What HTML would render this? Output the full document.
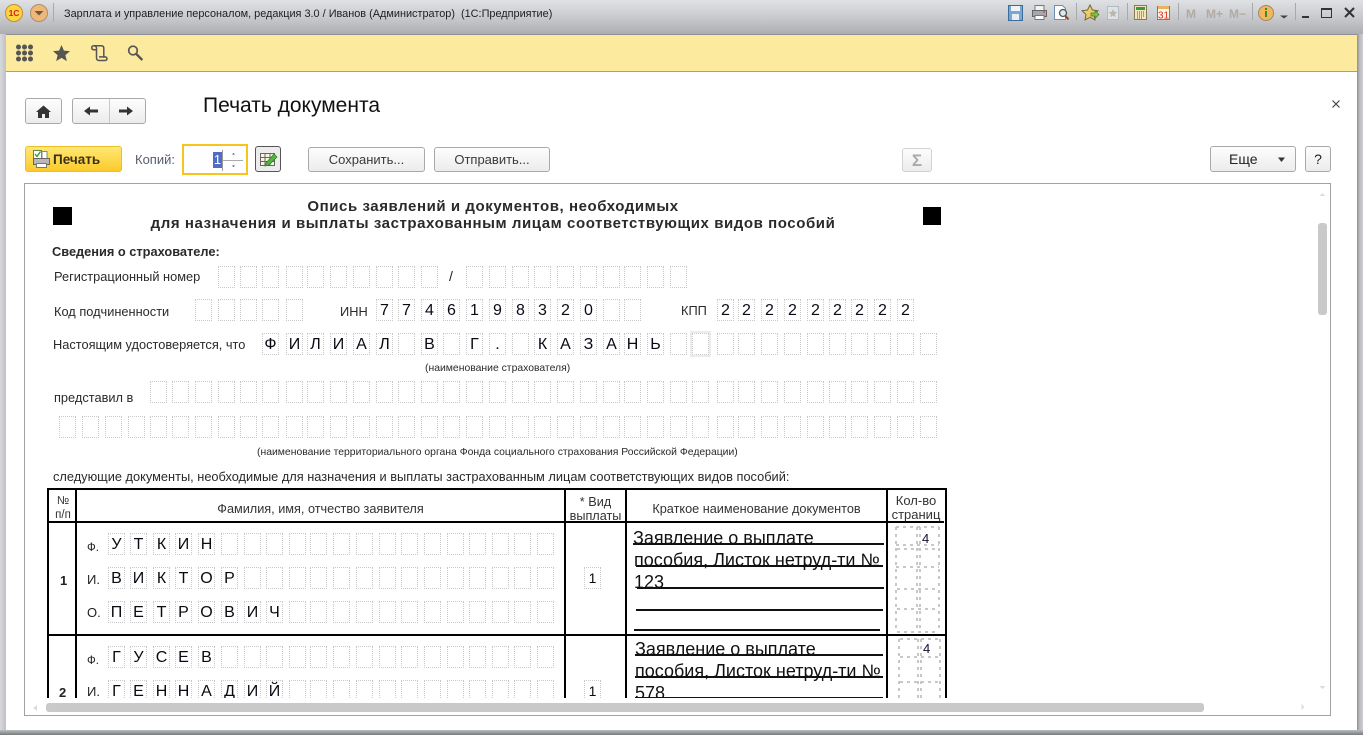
<!DOCTYPE html>
<html lang="ru"><head><meta charset="utf-8"><title>Печать документа</title>
<style>
html,body{margin:0;padding:0;background:#fff}
#w{position:relative;width:1363px;height:735px;overflow:hidden;background:#fff;font-family:"Liberation Sans",Arial,sans-serif;color:#222}
#w div,#w svg,#w span{position:absolute}
.t{white-space:nowrap}
.r{left:0;width:1363px;height:21px}
.r i{position:absolute;width:15px;height:20px;border:1px dotted #c8c8c8;font:16px/21px "Liberation Sans",sans-serif;color:#0a0a14;text-align:center;top:0}
.btn{box-sizing:border-box;border:1px solid #a9a9a9;border-radius:3px;background:linear-gradient(#fdfdfd,#ececec);text-align:center;font-size:13px;line-height:24px;color:#3a3a3a}
.h{font-size:12.700px;line-height:14px;color:#333;text-align:center;white-space:nowrap}
.l{font-size:12.800px;color:#2a2a2a;line-height:14px}
.s{font-size:10.400px;color:#2a2a2a;line-height:12px}
.b{background:#000}
.u{height:2px;background:#111}
.d{font-size:18px;line-height:20px;color:#111}
</style></head><body>
<div id="w">
<!-- window chrome -->
<div style="left:0;top:0;width:1363px;height:35px;background:linear-gradient(#dfe1e4,#c8cacd 50%,#aaacb0)"></div>
<div style="left:0;top:34px;width:6px;height:701px;background:linear-gradient(90deg,#d8d9dc,#bfc1c5)"></div>
<div style="left:1357px;top:34px;width:6px;height:701px;background:linear-gradient(90deg,#8e8e90,#b8b9bc 40%,#cfd0d3)"></div>
<div style="left:0;top:730px;width:1363px;height:5px;background:linear-gradient(#bcbec0,#767a7e)"></div>
<div style="left:6px;top:34px;width:1351px;height:1px;background:#8e8e90"></div>
<div style="left:6px;top:35px;width:1351px;height:36px;background:#fcea9f"></div>
<div style="left:6px;top:71px;width:1351px;height:1px;background:#bba52c"></div>
<!-- title bar -->
<svg style="left:4px;top:3px" width="46" height="21" viewBox="0 0 46 21">
<circle cx="10" cy="10" r="8.500" fill="#fbd640" stroke="#c98a3c"/><text x="10" y="13" font-size="8.500" font-weight="bold" fill="#d8201a" text-anchor="middle" font-family="Liberation Sans">1С</text>
<circle cx="35" cy="10" r="8.500" fill="#f0b878" stroke="#a89070"/><path d="M30.500 8h9l-4.500 4.500z" fill="#6a5a46"/></svg>
<div style="left:53px;top:3px;width:1px;height:19px;background:#a8aaae"></div>
<div class="t" style="left:64px;top:7px;font-size:10.900px;line-height:14px;color:#1e1e1e">Зарплата и управление персоналом, редакция 3.0 / Иванов (Администратор) &nbsp;(1С:Предприятие)</div>
<svg style="left:1000px;top:0" width="363" height="30" viewBox="1000 0 363 30">
<g fill="none">
<path d="M1008.500 5.500h14v15h-14z" fill="#7ba6cf" stroke="#3a6c9c"/><path d="M1011 6h9v5h-9z" fill="#eef4f8"/><path d="M1012 14h7v6h-7z" fill="#e8eef3"/>
<path d="M1035 5.500h9v5h-9z" fill="#f3f3f3" stroke="#777"/><path d="M1032.500 10.500h14v6h-14z" fill="#a9a9ad" stroke="#666"/><path d="M1035 15.500h9v4h-9z" fill="#fff" stroke="#777"/><path d="M1043 12h2" stroke="#c33"/>
<path d="M1054.500 5.500h8l3 3v11h-11z" fill="#fbfdff" stroke="#6c8fb2"/><circle cx="1063" cy="13" r="3.500" fill="#dde8f0" stroke="#555" stroke-width="1.300"/><path d="M1065.500 16l3 3.500" stroke="#8a4a20" stroke-width="2"/>
<path d="M1090 5l2.500 5 5.500.7-4 3.800 1 5.500-5-2.700-5 2.700 1-5.500-4-3.800 5.500-.7z" fill="#efcb68" stroke="#6f6a3a"/><path d="M1091 13h4v-2.500l4 4-4 4V16h-4z" fill="#7ec24a" stroke="#3f7a25" stroke-width=".7"/>
<path d="M1107.500 6.500h11v13h-11z" fill="#dfe3e8" stroke="#b2bac2"/><path d="M1113 9l1.300 2.700 3 .4-2.200 2 .6 3-2.700-1.500-2.700 1.500.6-3-2.200-2 3-.4z" fill="#bcb7a6"/>
<path d="M1134.500 5.500h12v14h-12z" fill="#f4e6bc" stroke="#877a55"/><path d="M1136 7h9v3h-9z" fill="#3f9a3f"/><path d="M1137 12h7M1137 14h7M1137 16h7M1137 18h5" stroke="#555" stroke-dasharray="1 1"/>
<path d="M1157.500 6.500h12v13h-12z" fill="#fdf6e6" stroke="#8a7a5a"/><path d="M1158 6h11v3h-11z" fill="#e9b25e"/>
</g>
<text x="1163.500" y="18.500" font-size="10" fill="#e02a1c" text-anchor="middle" font-family="Liberation Sans">31</text>
<g font-family="Liberation Sans" font-weight="bold" font-size="12" fill="#b1aaa3"><text x="1186" y="18">M</text><text x="1206" y="18">M+</text><text x="1229" y="18">M−</text></g>
<g fill="#a6a8ac"><rect x="1076" y="3" width="1" height="17"/><rect x="1127" y="3" width="1" height="17"/><rect x="1178" y="3" width="1" height="17"/><rect x="1252" y="3" width="1" height="17"/><rect x="1295" y="3" width="1" height="17"/></g>
<circle cx="1266" cy="13" r="7.500" fill="#f3b65a" stroke="#9c8a68"/><path d="M1265 11h2v6h-2zM1265 8h2v2h-2z" fill="#3f8a2a"/>
<path d="M1280 15.500h8l-4 3z" fill="#444"/>
<path d="M1302 16h7v2h-7z" fill="#333"/>
<path d="M1321.500 8.500h10v9h-10z" fill="none" stroke="#333"/><path d="M1321 8h11v2h-11z" fill="#333"/>
<path d="M1345 8l9 9M1354 8l-9 9" stroke="#333" stroke-width="2"/>
</svg>
<!-- yellow bar icons -->
<svg style="left:10px;top:38px" width="140" height="30" viewBox="10 38 140 30">
<g fill="#555"><circle cx="18.500" cy="47" r="2.500"/><circle cx="24.500" cy="47" r="2.500"/><circle cx="30.500" cy="47" r="2.500"/><circle cx="18.500" cy="53" r="2.500"/><circle cx="24.500" cy="53" r="2.500"/><circle cx="30.500" cy="53" r="2.500"/><circle cx="18.500" cy="59" r="2.500"/><circle cx="24.500" cy="59" r="2.500"/><circle cx="30.500" cy="59" r="2.500"/></g>
<path d="M61.500 45l2.400 5.600 6.100.5-4.600 4 1.400 6-5.300-3.200-5.300 3.200 1.400-6-4.600-4 6.100-.5z" fill="#555"/>
<path d="M94 45.800h7.500c1.800 0 2.300 1 2.300 2.500v9.500M94 45.800c1.500 0 2.500 1 2.500 2.500V58c0 1.500 1 2.500 2.500 2.500h6c1.200 0 2-.8 2-1.800s-.8-1.800-2-1.800h-6M94 45.800c-1.300 0-2.300.8-2.300 2s1 2 2.300 2h2.500" fill="none" stroke="#555" stroke-width="1.500"/>
<circle cx="133" cy="50.500" r="4.300" fill="none" stroke="#555" stroke-width="1.700"/><path d="M136.300 54l6 6" stroke="#555" stroke-width="2.300"/>
</svg>
<!-- nav -->
<div class="btn" style="left:25px;top:98px;width:37px;height:26px"></div>
<div class="btn" style="left:72px;top:98px;width:74px;height:26px"></div>
<div style="left:109px;top:99px;width:1px;height:24px;background:#c8c8c8"></div>
<svg style="left:25px;top:98px" width="125" height="26" viewBox="25 98 125 26">
<path d="M43.500 105.500l-7.500 6.500h2v6h4v-4h3v4h4v-6h2z" fill="#333"/>
<path d="M84 111l6-4.500v3h8v3h-8v3z" fill="#333"/><path d="M133 111l-6-4.500v3h-8v3h8v3z" fill="#333"/>
</svg>
<div class="t" style="left:203px;top:94px;font-size:21px;line-height:24px;color:#111">Печать документа</div>
<svg style="left:1331px;top:99px" width="10" height="10"><path d="M1.500 1.500l7 7M8.500 1.500l-7 7" stroke="#444" stroke-width="1.200"/></svg>
<!-- toolbar -->
<div style="box-sizing:border-box;left:25px;top:146px;width:97px;height:26px;border:1px solid #eebd2a;border-radius:3px;background:linear-gradient(#ffe874,#fbcb2a)"></div>
<svg style="left:32px;top:148px" width="20" height="22" viewBox="0 0 20 22"><path d="M1.500 2.500h8v8h-8z" fill="#fff" stroke="#5a8a5a"/><path d="M3 6l2 2.500L8.500 3.500" fill="none" stroke="#3a9a2a" stroke-width="1.400"/><path d="M10 3.500h5v7h-5z" fill="#fff" stroke="#888"/><path d="M1.500 10.500h16v6h-16z" fill="#b8b8b8" stroke="#666"/><path d="M4.500 15.500h10v4h-10z" fill="#fff" stroke="#777"/></svg>
<div class="t" style="left:53px;top:153px;font-size:13.500px;font-weight:bold;line-height:14px;color:#3b2f14">Печать</div>
<div class="t" style="left:135px;top:153px;font-size:13px;line-height:14px;color:#55606e">Копий:</div>
<div style="box-sizing:border-box;left:182px;top:144px;width:66px;height:31px;border:2px solid #f6c41a;background:#fff"></div>
<div style="left:213px;top:152px;width:9px;height:16px;background:#4f6cc6;color:#fff;font-size:13px;line-height:16px;text-align:center">1</div>
<div style="left:222px;top:150px;width:1px;height:21px;background:#999"></div>
<div style="left:223px;top:160px;width:20px;height:1px;background:#aaa"></div>
<svg style="left:230px;top:150px" width="8" height="20"><path d="M2 4.500h3L3.500 3zM2 15.500h3L3.500 17z" fill="#444"/></svg>
<div style="box-sizing:border-box;left:255px;top:146px;width:26px;height:26px;border:1px solid #555;border-radius:3px;background:#ececec"></div>
<svg style="left:260px;top:150px" width="18" height="18" viewBox="0 0 18 18"><path d="M.5 3.500h14v12H.5zM.5 7.500h14M.5 11.500h14M5 3.500v12M10 3.500v12" fill="#f7f2e2" stroke="#666"/><path d="M6 13l8-9 3 3-8 8-4 1z" fill="#4fb83a" stroke="#2f7a22" stroke-width=".7"/></svg>
<div class="btn" style="left:308px;top:147px;width:117px;height:25px">Сохранить...</div>
<div class="btn" style="left:434px;top:147px;width:116px;height:25px">Отправить...</div>
<div class="btn" style="left:902px;top:148px;width:30px;height:24px;border-color:#d2d2d2;color:#a9a9a9;font-size:17px;font-weight:bold;line-height:23px">Σ</div>
<div class="btn" style="left:1210px;top:146px;width:86px;height:26px;line-height:25px;text-align:left;padding-left:18px;font-size:14px;color:#222">Еще</div>
<svg style="left:1277px;top:157px" width="9" height="6"><path d="M1 .5h7L4.500 5z" fill="#333"/></svg>
<div class="btn" style="left:1305px;top:146px;width:26px;height:26px;font-size:14px;line-height:25px;color:#222">?</div>
<!-- panel -->
<div style="box-sizing:border-box;left:24px;top:183px;width:1307px;height:533px;border:1px solid #a2a2a2"></div>
<div style="left:1318px;top:223px;width:9px;height:92px;background:#c9c9c9;border-radius:3px"></div>
<div style="left:46px;top:703px;width:1158px;height:9px;background:#c9c9c9;border-radius:3px"></div>
<svg style="left:1300px;top:185px" width="30" height="525" viewBox="1300 185 30 525"><path d="M1319.500 196l3-3 3 3zM1319.500 686h6l-3 3zM1301.500 704v6l3-3z" fill="#dcdcdc"/></svg>
<svg style="left:30px;top:703px" width="10" height="10"><path d="M7 2v6L3 5z" fill="#dcdcdc"/></svg>
<!-- doc -->
<div id="doc" style="left:0;top:0;width:1363px;height:698px;overflow:hidden">
<div class="b" style="left:53px;top:207px;width:19px;height:18px"></div>
<div class="b" style="left:923px;top:207px;width:18px;height:18px"></div>
<div class="t" style="left:143px;top:198px;width:700px;text-align:center;font-size:15px;font-weight:bold;line-height:17px;color:#2a2a2a;letter-spacing:.57px">Опись заявлений и документов, необходимых<br>для назначения и выплаты застрахованным лицам соответствующих видов пособий</div>
<div class="t" style="left:52px;top:245px;font-size:12.800px;font-weight:bold;line-height:14px;color:#2a2a2a">Сведения о страхователе:</div>
<div class="t l" style="left:54px;top:270px">Регистрационный номер</div>
<div class="t l" style="left:54px;top:305px">Код подчиненности</div>
<div class="t l" style="left:340px;top:305px">ИНН</div>
<div class="t l" style="left:681px;top:304px">КПП</div>
<div class="t l" style="left:53px;top:338px">Настоящим удостоверяется, что</div>
<div class="t s" style="left:425px;top:363px">(наименование страхователя)</div>
<div class="t l" style="left:54px;top:391px">представил в</div>
<div class="t s" style="left:257px;top:447px">(наименование территориального органа Фонда социального страхования Российской Федерации)</div>
<div class="t l" style="left:53px;top:470px">следующие документы, необходимые для назначения и выплаты застрахованным лицам соответствующих видов пособий:</div>
<div class="t" style="left:449px;top:268px;font-size:14px;line-height:17px;color:#222">/</div>

<div class="r" style="top:266px"><i style="left:218px"></i><i style="left:240px"></i><i style="left:262px"></i><i style="left:286px"></i><i style="left:307px"></i><i style="left:330px"></i><i style="left:353px"></i><i style="left:376px"></i><i style="left:398px"></i><i style="left:421px"></i><i style="left:466px"></i><i style="left:489px"></i><i style="left:512px"></i><i style="left:534px"></i><i style="left:557px"></i><i style="left:580px"></i><i style="left:603px"></i><i style="left:624px"></i><i style="left:647px"></i><i style="left:670px"></i></div>
<div class="r" style="top:299px"><i style="left:195px"></i><i style="left:218px"></i><i style="left:240px"></i><i style="left:262px"></i><i style="left:286px"></i><i style="left:376px">7</i><i style="left:398px">7</i><i style="left:421px">4</i><i style="left:443px">6</i><i style="left:466px">1</i><i style="left:489px">9</i><i style="left:512px">8</i><i style="left:534px">3</i><i style="left:557px">2</i><i style="left:580px">0</i><i style="left:603px"></i><i style="left:624px"></i><i style="left:717px">2</i><i style="left:738px">2</i><i style="left:761px">2</i><i style="left:784px">2</i><i style="left:807px">2</i><i style="left:829px">2</i><i style="left:851px">2</i><i style="left:874px">2</i><i style="left:897px">2</i></div>
<div class="r" style="top:333px"><i style="left:262px">Ф</i><i style="left:286px">И</i><i style="left:307px">Л</i><i style="left:330px">И</i><i style="left:353px">А</i><i style="left:376px">Л</i><i style="left:398px"></i><i style="left:421px">В</i><i style="left:443px"></i><i style="left:466px">Г</i><i style="left:489px">.</i><i style="left:512px"></i><i style="left:534px">К</i><i style="left:557px">А</i><i style="left:580px">З</i><i style="left:603px">А</i><i style="left:624px">Н</i><i style="left:647px">Ь</i><i style="left:670px"></i><i style="left:692px;outline:2px solid #ececec"></i><i style="left:717px"></i><i style="left:738px"></i><i style="left:761px"></i><i style="left:784px"></i><i style="left:807px"></i><i style="left:829px"></i><i style="left:851px"></i><i style="left:874px"></i><i style="left:897px"></i><i style="left:920px"></i></div>
<div class="r" style="top:381px"><i style="left:150px"></i><i style="left:172px"></i><i style="left:195px"></i><i style="left:218px"></i><i style="left:240px"></i><i style="left:262px"></i><i style="left:286px"></i><i style="left:307px"></i><i style="left:330px"></i><i style="left:353px"></i><i style="left:376px"></i><i style="left:398px"></i><i style="left:421px"></i><i style="left:443px"></i><i style="left:466px"></i><i style="left:489px"></i><i style="left:512px"></i><i style="left:534px"></i><i style="left:557px"></i><i style="left:580px"></i><i style="left:603px"></i><i style="left:624px"></i><i style="left:647px"></i><i style="left:670px"></i><i style="left:692px"></i><i style="left:717px"></i><i style="left:738px"></i><i style="left:761px"></i><i style="left:784px"></i><i style="left:807px"></i><i style="left:829px"></i><i style="left:851px"></i><i style="left:874px"></i><i style="left:897px"></i><i style="left:920px"></i></div>
<div class="r" style="top:416px"><i style="left:59px"></i><i style="left:82px"></i><i style="left:105px"></i><i style="left:128px"></i><i style="left:150px"></i><i style="left:172px"></i><i style="left:195px"></i><i style="left:218px"></i><i style="left:240px"></i><i style="left:262px"></i><i style="left:286px"></i><i style="left:307px"></i><i style="left:330px"></i><i style="left:353px"></i><i style="left:376px"></i><i style="left:398px"></i><i style="left:421px"></i><i style="left:443px"></i><i style="left:466px"></i><i style="left:489px"></i><i style="left:512px"></i><i style="left:534px"></i><i style="left:557px"></i><i style="left:580px"></i><i style="left:603px"></i><i style="left:624px"></i><i style="left:647px"></i><i style="left:670px"></i><i style="left:692px"></i><i style="left:717px"></i><i style="left:738px"></i><i style="left:761px"></i><i style="left:784px"></i><i style="left:807px"></i><i style="left:829px"></i><i style="left:851px"></i><i style="left:874px"></i><i style="left:897px"></i><i style="left:920px"></i></div>

<!-- table lines -->
<div class="b" style="left:47px;top:488px;width:900px;height:2px"></div>
<div class="b" style="left:47px;top:521px;width:897px;height:2px"></div>
<div class="b" style="left:47px;top:634px;width:900px;height:2px"></div>
<div class="b" style="left:47px;top:488px;width:2px;height:220px"></div>
<div class="b" style="left:75px;top:488px;width:2px;height:220px"></div>
<div class="b" style="left:564px;top:488px;width:2px;height:220px"></div>
<div class="b" style="left:625px;top:488px;width:2px;height:220px"></div>
<div class="b" style="left:886px;top:488px;width:2px;height:220px"></div>
<div class="b" style="left:945px;top:488px;width:2px;height:220px"></div>
<div class="h" style="left:49px;top:494px;width:28px;font-size:11.500px">№<br>п/п</div>
<div class="h" style="left:77px;top:502px;width:487px">Фамилия, имя, отчество заявителя</div>
<div class="h" style="left:566px;top:495px;width:59px">* Вид<br>выплаты</div>
<div class="h" style="left:627px;top:502px;width:259px">Краткое наименование документов</div>
<div class="h" style="left:888px;top:494px;width:56px;font-size:13px">Кол-во<br>страниц</div>

<div class="t" style="left:60px;top:573px;font-size:13px;font-weight:bold;line-height:15px;color:#222">1</div>
<div class="t" style="left:59px;top:685px;font-size:13px;font-weight:bold;line-height:15px;color:#222">2</div>
<div class="t" style="left:87px;top:541px;font-size:11.500px;line-height:14px">Ф.</div>
<div class="t" style="left:87px;top:573px;font-size:13px;line-height:14px">И.</div>
<div class="t" style="left:87px;top:606px;font-size:13px;line-height:14px">О.</div>
<div class="t" style="left:87px;top:654px;font-size:11.500px;line-height:14px">Ф.</div>
<div class="t" style="left:87px;top:685px;font-size:13px;line-height:14px">И.</div>

<div class="r" style="top:533px"><i style="left:108px">У</i><i style="left:130px">Т</i><i style="left:153px">К</i><i style="left:175px">И</i><i style="left:198px">Н</i><i style="left:221px"></i><i style="left:244px"></i><i style="left:266px"></i><i style="left:289px"></i><i style="left:310px"></i><i style="left:333px"></i><i style="left:356px"></i><i style="left:379px"></i><i style="left:401px"></i><i style="left:424px"></i><i style="left:447px"></i><i style="left:469px"></i><i style="left:492px"></i><i style="left:514px"></i><i style="left:537px"></i></div>
<div class="r" style="top:567px"><i style="left:108px">В</i><i style="left:130px">И</i><i style="left:153px">К</i><i style="left:175px">Т</i><i style="left:198px">О</i><i style="left:221px">Р</i><i style="left:244px"></i><i style="left:266px"></i><i style="left:289px"></i><i style="left:310px"></i><i style="left:333px"></i><i style="left:356px"></i><i style="left:379px"></i><i style="left:401px"></i><i style="left:424px"></i><i style="left:447px"></i><i style="left:469px"></i><i style="left:492px"></i><i style="left:514px"></i><i style="left:537px"></i><i style="left:584px;font-size:14px">1</i></div>
<div class="r" style="top:601px"><i style="left:108px">П</i><i style="left:130px">Е</i><i style="left:153px">Т</i><i style="left:175px">Р</i><i style="left:198px">О</i><i style="left:221px">В</i><i style="left:244px">И</i><i style="left:266px">Ч</i><i style="left:289px"></i><i style="left:310px"></i><i style="left:333px"></i><i style="left:356px"></i><i style="left:379px"></i><i style="left:401px"></i><i style="left:424px"></i><i style="left:447px"></i><i style="left:469px"></i><i style="left:492px"></i><i style="left:514px"></i><i style="left:537px"></i></div>
<div class="r" style="top:646px"><i style="left:108px">Г</i><i style="left:130px">У</i><i style="left:153px">С</i><i style="left:175px">Е</i><i style="left:198px">В</i><i style="left:221px"></i><i style="left:244px"></i><i style="left:266px"></i><i style="left:289px"></i><i style="left:310px"></i><i style="left:333px"></i><i style="left:356px"></i><i style="left:379px"></i><i style="left:401px"></i><i style="left:424px"></i><i style="left:447px"></i><i style="left:469px"></i><i style="left:492px"></i><i style="left:514px"></i><i style="left:537px"></i></div>
<div class="r" style="top:680px"><i style="left:108px">Г</i><i style="left:130px">Е</i><i style="left:153px">Н</i><i style="left:175px">Н</i><i style="left:198px">А</i><i style="left:221px">Д</i><i style="left:244px">И</i><i style="left:266px">Й</i><i style="left:289px"></i><i style="left:310px"></i><i style="left:333px"></i><i style="left:356px"></i><i style="left:379px"></i><i style="left:401px"></i><i style="left:424px"></i><i style="left:447px"></i><i style="left:469px"></i><i style="left:492px"></i><i style="left:514px"></i><i style="left:537px"></i><i style="left:584px;font-size:14px">1</i></div>

<!-- doc names -->
<div class="t d" style="left:633px;top:528px">Заявление о выплате</div>
<div class="t d" style="left:634px;top:550px">пособия, Листок нетруд-ти №</div>
<div class="t d" style="left:634px;top:572px">123</div>
<div class="t d" style="left:635px;top:639px">Заявление о выплате</div>
<div class="t d" style="left:635px;top:661px">пособия, Листок нетруд-ти №</div>
<div class="t d" style="left:635px;top:683px">578</div>
<div class="u" style="left:633px;top:543px;width:251px"></div>
<div class="u" style="left:636px;top:565px;width:247px"></div>
<div class="u" style="left:637px;top:587px;width:247px"></div>
<div class="u" style="left:636px;top:609px;width:247px"></div>
<div class="u" style="left:634px;top:629px;width:246px"></div>
<div class="u" style="left:635px;top:654px;width:248px"></div>
<div class="u" style="left:635px;top:676px;width:248px"></div>
<div class="u" style="left:635px;top:697px;width:248px"></div>

<!-- pages -->
<svg style="left:888px;top:523px" width="58" height="180" viewBox="888 523 58 180">
<g fill="none" stroke="#c8c8c8" stroke-width="2" stroke-dasharray="3 4">
<path d="M896 527h43M896 545h43M897 549h42M896 567h43M897 589h42M897 609h42M897 632h42"/>
<path d="M896 527v105M917 527v105M920 527v105M939 527v105"/>
<path d="M900 639h39M900 657h39M900 682h39"/>
<path d="M899 639v65M918 639v65M921 639v65M940 639v65"/>
</g></svg>
<div class="t" style="left:922px;top:532px;font-size:13px;line-height:14px;color:#101030">4</div>
<div class="t" style="left:923px;top:642px;font-size:13px;line-height:14px;color:#101030">4</div>
</div>
</div>
</body></html>
